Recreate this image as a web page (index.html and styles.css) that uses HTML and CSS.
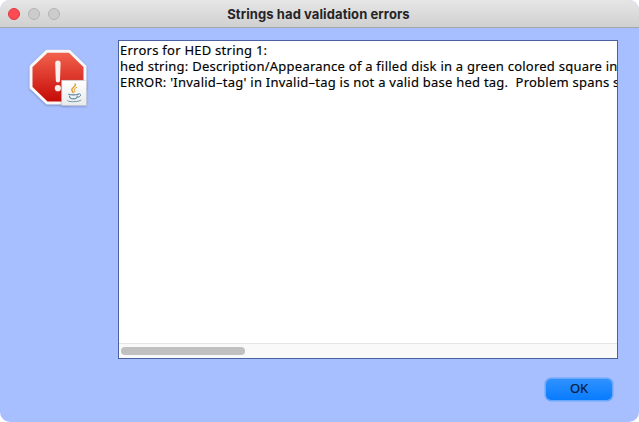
FILE: index.html
```html
<!DOCTYPE html>
<html lang="en">
<head>
<meta charset="utf-8">
<title>Strings had validation errors</title>
<link rel="stylesheet" href="styles.css">
</head>
<body>
<main class="dialog">
  <header class="titlebar">
    <div class="lights"><span class="light close"></span><span class="light"></span><span class="light"></span></div>
    <h1 class="title">Strings had validation errors</h1>
  </header>
  <div class="content">
    <svg class="alert" width="64" height="64" viewBox="0 0 64 64" aria-hidden="true">
      <defs>
        <linearGradient id="red" x1="0" y1="0" x2="0" y2="1"><stop offset="0" stop-color="#f3644f"/><stop offset="1" stop-color="#c40804"/></linearGradient>
        <linearGradient id="paper" x1="0" y1="0" x2="0" y2="1"><stop offset="0" stop-color="#fff"/><stop offset="1" stop-color="#e9eaeb"/></linearGradient>
      </defs>
      <path class="sign" d="M21 4.200H43.400L59 19.500V40.700L43.400 56H21L5 40.700V19.500Z" fill="url(#red)" stroke="#f8f8f8" stroke-width="3" stroke-linejoin="round"/>
      <path d="M29.200 16.200a2.700 2.700 0 0 1 5.400 0L34 33.500a2.100 2.100 0 0 1-4.200 0Z" fill="#f8efee"/>
      <circle cx="31.900" cy="41.200" r="3.100" fill="#f8efee"/>
      <rect class="sheet" x="35.800" y="33.300" width="24.500" height="25" fill="url(#paper)" stroke="#cfd0d4" stroke-width=".7"/>
      <g fill="none" stroke-linecap="round">
        <path d="M49.200 37c1.600 2.400-4.400 3.800-3.400 6.200.3.800 1.100 1.500 1.300 2.300" stroke="#e79a25" stroke-width="1.400"/>
        <path d="M50.600 40.500c-2.400 1-2.900 1.800-2 3 .6.8 0 1.400-.6 1.900" stroke="#e79a25" stroke-width="1"/>
        <path d="M42.600 47.200c2 .9 7.600.8 9.400 0M43.400 49c.2 2.600 1.500 2.900 4 2.900s3.700-.3 4-2.900" stroke="#5c879f" stroke-width="1.100"/>
        <path d="M52.400 47c3-1 3.300 2.400-.4 3.300" stroke="#5c879f" stroke-width="1"/>
        <path d="M41.500 53.500c-1.500 1.400 10.500 2 13.500-.3" stroke="#6f97ad" stroke-width="1"/>
      </g>
    </svg>
    <div class="main">
      <section class="report">
        <div class="lines">
          <p class="line first">Errors for HED string 1:</p>
          <p class="line second">hed string: Description/Appearance of a filled disk in a green colored square in</p>
          <p class="line third">ERROR: 'Invalid–tag' in Invalid–tag is not a valid base hed tag.  Problem spans s</p>
        </div>
        <div class="scroll"><div class="thumb"></div></div>
      </section>
      <button class="ok" type="button">OK</button>
    </div>
  </div>
</main>
</body>
</html>
```
FILE: styles.css
```css
* { box-sizing: border-box; }
body { margin: 0; background: #fff; }
.dialog {
  width: 639px;
  height: 422px;
  overflow: hidden;
  border-radius: 10px;
  background: #a7bffe;
  display: flex;
  flex-direction: column;
}
.titlebar {
  height: 28px;
  flex: none;
  display: grid;
  grid-template-columns: 80px 1fr 80px;
  align-items: center;
  background: linear-gradient(#e7e6e7, #d1d0d1);
  border-bottom: 1px solid #a5a6ae;
}
.lights { display: flex; gap: 8px; padding-left: 8px; }
.light {
  width: 12px;
  height: 12px;
  border: 1px solid #b4b3b4;
  border-radius: 50%;
  background: #cdcccd;
}
.close { background: #fc4b53; border-color: #dc3a41; }
.title {
  margin: 0;
  padding: 0 2px 0 0;
  text-align: center;
  font: 700 13px/16px Inter, "Liberation Sans", sans-serif;
  letter-spacing: 0.09px;
  color: #262526;
  white-space: nowrap;
}
.content { flex: 1; display: flex; padding: 12px 21px 0 26px; }
.alert { flex: none; margin-top: 7px; overflow: visible; }
.sign { filter: drop-shadow(0 1px 1px rgba(50, 60, 100, .4)); }
.sheet { filter: drop-shadow(0 1px 1px rgba(50, 60, 100, .3)); }
.main {
  width: 500px;
  margin-left: 28px;
  display: flex;
  flex-direction: column;
}
.report {
  height: 319px;
  display: flex;
  flex-direction: column;
  border: 1px solid #4a62a0;
  background: #fff;
  overflow: hidden;
}
.lines { flex: 1; padding: 1px 1px 0; overflow: hidden; }
.line {
  margin: 0;
  font: 13px/16px "Noto Sans", "Open Sans", sans-serif;
  color: #000;
  white-space: pre;
  -webkit-text-stroke: 0.15px #000;
}
.first { letter-spacing: 0.25px; }
.second { letter-spacing: 0.24px; }
.third { letter-spacing: 0.24px; }
.scroll {
  height: 15px;
  flex: none;
  padding: 3px 2px;
  border-top: 1px solid #e4e4e4;
  background: #f9f9f9;
}
.thumb { width: 124px; height: 8px; border-radius: 4px; background: #c0c0c0; }
.ok {
  align-self: flex-end;
  width: 66px;
  height: 21px;
  margin: 20px 6px 0 0;
  padding: 0 0 2px;
  border: 0;
  border-radius: 5px;
  background: linear-gradient(#2f92ff, #087bff);
  box-shadow: 0 0 0 1.5px rgba(84, 158, 251, .75);
  color: #071a38;
  font: 13px/19px "Noto Sans", sans-serif;
  -webkit-text-stroke: 0.2px #071a38;
}
```
